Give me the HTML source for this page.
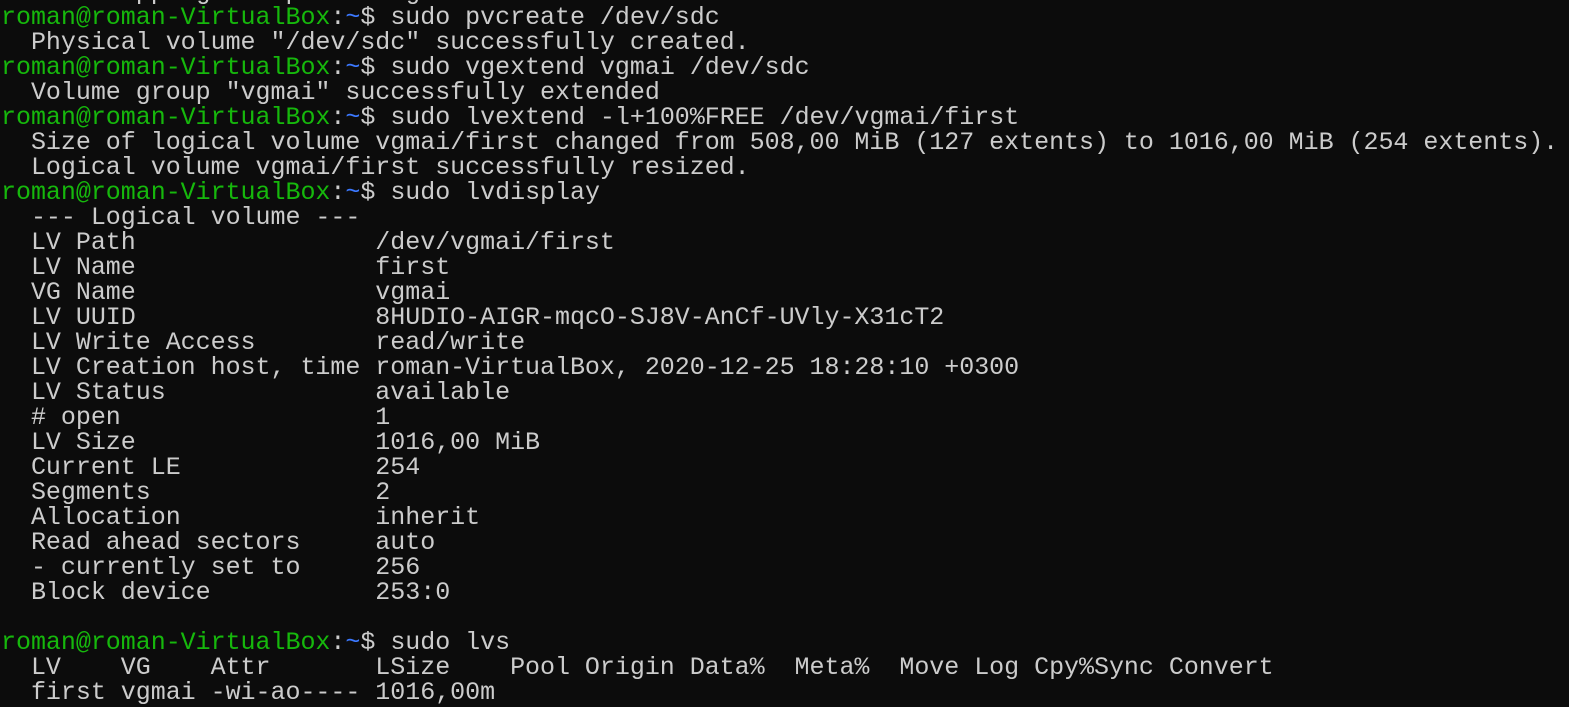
<html><head><style>
body{margin:0;background:#0c0c0c;width:1569px;height:706px;overflow:hidden;}
pre{position:absolute;left:1px;top:-20px;margin:0;font-family:"Liberation Mono",monospace;font-size:25px;line-height:25px;color:#cccccc;letter-spacing:-0.03px;}
.g{color:#16b80c}.b{color:#3b78ff}
</style></head><body><pre>/ /ab/ /apps/git/ /pull origin master   /
<span class="g">roman@roman-VirtualBox</span>:<span class="b">~</span>$ sudo pvcreate /dev/sdc
  Physical volume "/dev/sdc" successfully created.
<span class="g">roman@roman-VirtualBox</span>:<span class="b">~</span>$ sudo vgextend vgmai /dev/sdc
  Volume group "vgmai" successfully extended
<span class="g">roman@roman-VirtualBox</span>:<span class="b">~</span>$ sudo lvextend -l+100%FREE /dev/vgmai/first
  Size of logical volume vgmai/first changed from 508,00 MiB (127 extents) to 1016,00 MiB (254 extents).
  Logical volume vgmai/first successfully resized.
<span class="g">roman@roman-VirtualBox</span>:<span class="b">~</span>$ sudo lvdisplay
  --- Logical volume ---
  LV Path                /dev/vgmai/first
  LV Name                first
  VG Name                vgmai
  LV UUID                8HUDIO-AIGR-mqcO-SJ8V-AnCf-UVly-X31cT2
  LV Write Access        read/write
  LV Creation host, time roman-VirtualBox, 2020-12-25 18:28:10 +0300
  LV Status              available
  # open                 1
  LV Size                1016,00 MiB
  Current LE             254
  Segments               2
  Allocation             inherit
  Read ahead sectors     auto
  - currently set to     256
  Block device           253:0

<span class="g">roman@roman-VirtualBox</span>:<span class="b">~</span>$ sudo lvs
  LV    VG    Attr       LSize    Pool Origin Data%  Meta%  Move Log Cpy%Sync Convert
  first vgmai -wi-ao---- 1016,00m
</pre></body></html>
